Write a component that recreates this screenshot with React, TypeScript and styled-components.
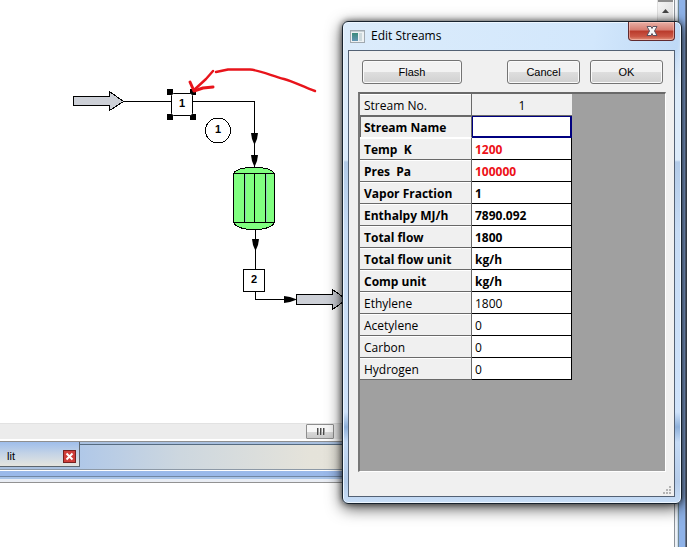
import React from "react";
import styled, { createGlobalStyle, css } from "styled-components";

const GlobalStyle = createGlobalStyle`
  *, *::before, *::after { box-sizing: border-box; }
  body { margin: 0; background: #fff; overflow: hidden; }
  button, input { font: inherit; }
`;

const Desktop = styled.div`
  position: relative;
  display: flex;
  height: 100vh;
  overflow: hidden;
  color: #000;
  font-family: "Open Sans", "Noto Sans", sans-serif;
  font-size: 12px;
`;

const MainColumn = styled.div`
  flex: 1;
  min-width: 0;
  display: flex;
  flex-direction: column;
`;

const CanvasRow = styled.div`
  flex: 1;
  min-height: 0;
  display: flex;
`;

const Canvas = styled.main`
  flex: 1;
  min-width: 0;
  overflow: hidden;
  background: #fff;
`;

const Diagram = styled.svg`
  display: block;
  font-family: "Liberation Sans", Arial, sans-serif;
`;

const VerticalScroll = styled.div`
  width: 16px;
  background: #ececec;
  border-left: 1px solid #e0e0e0;
`;

const ScrollArrow = styled.button`
  display: flex;
  justify-content: center;
  align-items: center;
  width: 100%;
  height: 20px;
  padding: 0;
  border: 0;
  border-top: 2px solid #8c8c8c;
  background: linear-gradient(90deg, #f3f3f3, #e4e4e4);
`;

const HorizontalScroll = styled.div`
  display: flex;
  height: 16px;
  padding-left: 306px;
  border-top: 1px solid #e2e2e2;
  background: #ececec;
`;

const ScrollThumb = styled.button`
  display: flex;
  justify-content: center;
  align-items: center;
  gap: 2px;
  width: 28px;
  height: 15px;
  padding: 0;
  border: 1px solid #8e8e8e;
  border-radius: 1px;
  background: linear-gradient(#f7f7f7 0 50%, #dadada 50%, #cacaca);
`;

const Grip = styled.span`
  width: 1px;
  height: 7px;
  background: #4c4c4c;
  box-shadow: 1px 0 #a6a6a6;
`;

const TabStrip = styled.div`
  display: flex;
  height: 29px;
  margin-top: 2px;
  border-top: 1px solid #8f8f8f;
  border-bottom: 1px solid #8d99a6;
  background: #a9c0df;
`;

const Tab = styled.div`
  display: flex;
  align-items: center;
  justify-content: space-between;
  width: 80px;
  height: 25px;
  padding: 4px 3px 0 7px;
  border-right: 1px solid #5c6670;
  border-bottom: 1px solid #5c6670;
  background: linear-gradient(#9fbeeb, #c5d4e6 50%, #e5e5df);
  font-family: "Liberation Sans", Arial, sans-serif;
  font-size: 11px;
`;

const TabClose = styled.button`
  display: flex;
  align-items: center;
  justify-content: center;
  width: 13px;
  height: 13px;
  padding: 0;
  border: 1px solid #762020;
  background: #cf3d39;
`;

const TabBackdrop = styled.div`
  flex: 1;
  margin-top: 2px;
  border-top: 1px solid #566b80;
  background: linear-gradient(90deg, #b0c8e8 0, #cdd7df 100px, #e5e3da 230px, #e8e6df);
`;

const FrameEdge = styled.div`
  height: 13px;
  border-bottom: 1px solid #929292;
  background: linear-gradient(#fff 0 1px, #9ab9ea 1px 6px, #7187a4 6px 7px, #a9c4e8 7px 9px, #e9edf4 9px);
`;

const LowerPane = styled.div`
  height: 64px;
  background: #fff;
`;

const RightFrame = styled.div`
  width: 14px;
  background: linear-gradient(90deg, #fff 0 1px, #8c9299 1px 2px, #edf1f5 2px 4px, #cddbe9 4px 5px, #6f8792 5px 6px, #8eb2e8 6px 12px, #64738d 12px 13px, #434b58 13px);
`;

const DialogWindow = styled.section`
  position: absolute;
  top: 21px;
  right: 5px;
  display: flex;
  flex-direction: column;
  width: 340px;
  height: 483px;
  padding: 0 6px 6px 5px;
  border: 1px solid #17222d;
  border-radius: 6px;
  background: linear-gradient(180deg, transparent 30px, #dcebfa 80px, #dcebfa 138px, #b3cbe8 140px, #c7dcf5 210px, #cfe3fb 390px, #8eb0da 405px, #c5dbf6 420px, #b5ccea 460px, #c8def7),
    linear-gradient(100deg, #dcecfb, #d2e7fc 60%, #bfd9f6 80%, #dce8f5 82%, #d1e1f3);
  box-shadow: inset 0 0 0 1px #edf6ff, 0 0 6px rgba(0, 0, 0, 0.6), 0 4px 16px rgba(0, 0, 0, 0.7);
`;

const TitleBar = styled.header`
  display: flex;
  align-items: center;
  gap: 6px;
  height: 28px;
  padding-left: 2px;
`;

const Title = styled.h1`
  flex: 1;
  margin: 0;
  font-size: 12px;
  font-weight: 400;
  line-height: 16px;
`;

const CloseButton = styled.button`
  display: flex;
  align-items: center;
  justify-content: center;
  align-self: flex-start;
  width: 47px;
  height: 19px;
  padding: 0;
  border: 1px solid #602a2f;
  border-top: 0;
  border-radius: 0 0 4px 4px;
  background: linear-gradient(#e8b0a6, #d67c70 45%, #b93a2b 50%, #ca5644 80%, #df8f79);
  box-shadow: inset 0 0 0 1px rgba(255, 210, 200, 0.5);
`;

const DialogBody = styled.div`
  flex: 1;
  min-height: 0;
  display: flex;
  flex-direction: column;
  gap: 8px;
  padding: 9px 8px 0 9px;
  border: 1px solid #536174;
  background: #f0f0f0;
`;

const ButtonBar = styled.div`
  display: flex;
  gap: 10px;
  padding: 0 3px 0 4px;
`;

const PushButton = styled.button<{ $wide?: boolean }>`
  width: ${(p) => (p.$wide ? 100 : 73)}px;
  height: 24px;
  ${(p) => p.$wide && css`margin-right: auto;`}
  padding: 0;
  border: 1px solid #747474;
  border-radius: 3px;
  background: linear-gradient(#f2f2f2 0 48%, #dedede 50%, #d0d0d0);
  box-shadow: inset 0 0 0 1px #fafafa;
  font-family: "Liberation Sans", Arial, sans-serif;
  font-size: 11px;
  line-height: 16px;
`;

const GridArea = styled.div`
  flex: 1;
  min-height: 0;
  border: 1px solid #fff;
  border-top: 2px solid #696969;
  border-left: 2px solid #777;
  background: #a0a0a0;
`;

const StreamTable = styled.table`
  width: 212px;
  border-collapse: separate;
  border-spacing: 0;
  table-layout: fixed;
`;

const LabelCol = styled.col`
  width: 112px;
`;

const RowLabel = styled.th<{ $strong?: boolean; $active?: boolean }>`
  height: 22px;
  padding: 2px 0 0 4px;
  border-right: 1px solid #696969;
  border-bottom: 1px solid #696969;
  background: #f0f0f0;
  box-shadow: inset 0 1px #fff;
  font-weight: ${(p) => (p.$strong ? 700 : 400)};
  line-height: 18px;
  text-align: left;
  white-space: pre;
  ${(p) => p.$active && css`
    border-bottom-color: #fff;
    box-shadow: inset 1px 1px #696969;
  `}
`;

const ColumnLabel = styled.th`
  height: 22px;
  padding: 2px 0 0;
  border-bottom: 1px solid #696969;
  background: #f0f0f0;
  font-weight: 400;
  line-height: 18px;
`;

const ValueCell = styled.td`
  height: 22px;
  padding: 0;
`;

const ValueInput = styled.input<{ $strong?: boolean; $fixed?: boolean; $active?: boolean }>`
  display: block;
  width: 100%;
  height: 22px;
  padding: 2px 3px 0;
  border: 0 solid #000;
  border-width: 0 1px 1px 0;
  border-radius: 0;
  outline: 0;
  background: #fff;
  color: ${(p) => (p.$fixed ? "#ed1118" : "#000")};
  font-weight: ${(p) => (p.$strong ? 700 : 400)};
  ${(p) => p.$active && css`
    border: 1px solid #000080;
    box-shadow: inset -1px -1px #000080;
  `}
`;

const StatusBar = styled.footer`
  display: flex;
  align-items: flex-end;
  justify-content: flex-end;
  height: 16px;
  margin-right: -6px;
`;

type Row = { label: string; value: string; strong?: boolean; fixed?: boolean; active?: boolean };

const rows: Row[] = [
  { label: "Stream Name", value: "", strong: true, active: true },
  { label: "Temp  K", value: "1200", strong: true, fixed: true },
  { label: "Pres  Pa", value: "100000", strong: true, fixed: true },
  { label: "Vapor Fraction", value: "1", strong: true },
  { label: "Enthalpy MJ/h", value: "7890.092", strong: true },
  { label: "Total flow", value: "1800", strong: true },
  { label: "Total flow unit", value: "kg/h", strong: true },
  { label: "Comp unit", value: "kg/h", strong: true },
  { label: "Ethylene", value: "1800" },
  { label: "Acetylene", value: "0" },
  { label: "Carbon", value: "0" },
  { label: "Hydrogen", value: "0" },
];

function FlowDiagram() {
  return (
    <Diagram width="657" height="423" viewBox="0 0 657 423" role="img" aria-label="Process flow diagram">
      <g fill="none" stroke="#000" shapeRendering="crispEdges">
        <path d="M123 101.500H254.500V168M255.500 229V299.500H290" />
        <path d="M73.500 96.500H109.500V91.500L123.500 101.500L109.500 110.500V105.500H73.500Z" fill="#cdd0d7" />
        <path d="M296.500 294.500H332.500V289.500L346.500 299.500L332.500 309.500V304.500H296.500Z" fill="#cdd0d7" />
        <path d="M233.500 173.500C236 169 246 167.500 254 167.500C264 167.500 272 169 274.500 173.500V222.500C272 227 264 229.500 254 229.500C244 229.500 236 227 233.500 222.500Z" fill="#80ff80" />
        <path d="M233.500 173.500H274.500M233.500 222.500H274.500M244.500 174V222M254.500 174V222M265.500 174V222" />
        <path d="M245.500 174V222M266.500 174V222" stroke="#8cd6b7" />
      </g>
      <circle cx="218" cy="130.500" r="12.500" fill="#fff" stroke="#000" shapeRendering="crispEdges" />
      <g fill="#000">
        <path d="M251 133H258L257 139L254.500 145L252 139Z" />
        <path d="M251 155H258L257 161L254.500 167L252 161Z" />
        <path d="M252 239H259L258 245L255.500 251L253 245Z" />
        <path d="M284 296L290 297L297 299.500L290 302L284 303Z" />
        <path d="M167 89H173V95H167ZM190 89H196V95H190ZM167 114H173V120H167ZM190 114H196V120H190Z" />
      </g>
      <g fill="#fff" stroke="#000">
        <rect x="171.500" y="93.500" width="21" height="22" rx="2" />
        <rect x="243.500" y="269.500" width="21" height="22" />
      </g>
      <g fontSize="11" fontWeight="700" textAnchor="middle">
        <text x="182" y="107">1</text>
        <text x="218" y="133">1</text>
        <text x="254" y="283">2</text>
      </g>
      <g fill="none" stroke="#e8141b" strokeWidth="2.400" strokeLinecap="round" strokeLinejoin="round">
        <path d="M315 91C303 87 295 82 284 79C270 75 258 70 250 69.500H228L216 72M213 71L206 79L194 90" />
        <path d="M190 82L194 91L203 88L213 87" strokeWidth="3" />
      </g>
    </Diagram>
  );
}

function AppIcon() {
  return (
    <svg width="15" height="13" viewBox="0 0 15 13" aria-hidden="true">
      <defs>
        <linearGradient id="app-icon-fill" x2="0" y2="1">
          <stop stopColor="#3c8b7b" />
          <stop offset="1" stopColor="#6396b5" />
        </linearGradient>
      </defs>
      <rect x="0.500" y="0.500" width="14" height="12" fill="#eef2f3" stroke="#a0a9b0" />
      <path d="M2 3H8V11H2Z" fill="url(#app-icon-fill)" />
      <path d="M9 3H12V11H9Z" fill="#cdd9dc" />
      <path d="M1 1.500H14" stroke="#c5ced2" />
    </svg>
  );
}

function Dialog() {
  return (
    <DialogWindow role="dialog" aria-labelledby="dialog-title">
      <TitleBar>
        <AppIcon />
        <Title id="dialog-title">Edit Streams</Title>
        <CloseButton type="button" aria-label="Close">
          <svg width="14" height="12" viewBox="0 0 14 12" aria-hidden="true">
            <path d="M2 1.500H6L7 3.500L8 1.500H12L9.500 6L12 10.500H8L7 8.500L6 10.500H2L4.500 6Z" fill="#f7f7f7" stroke="#5c5360" strokeLinejoin="round" />
          </svg>
        </CloseButton>
      </TitleBar>
      <DialogBody>
        <ButtonBar>
          <PushButton type="button" $wide>Flash</PushButton>
          <PushButton type="button">Cancel</PushButton>
          <PushButton type="button">OK</PushButton>
        </ButtonBar>
        <GridArea>
          <StreamTable>
            <colgroup>
              <LabelCol />
              <col />
            </colgroup>
            <thead>
              <tr>
                <RowLabel scope="row">Stream No.</RowLabel>
                <ColumnLabel scope="col">1</ColumnLabel>
              </tr>
            </thead>
            <tbody>
              {rows.map((row, i) => (
                <tr key={row.label}>
                  <RowLabel scope="row" $strong={row.strong} $active={row.active}>
                    <label htmlFor={`field-${i}`}>{row.label}</label>
                  </RowLabel>
                  <ValueCell>
                    <ValueInput
                      id={`field-${i}`}
                      defaultValue={row.value}
                      $strong={row.strong}
                      $fixed={row.fixed}
                      $active={row.active}
                    />
                  </ValueCell>
                </tr>
              ))}
            </tbody>
          </StreamTable>
        </GridArea>
        <StatusBar>
          <svg width="10" height="10" viewBox="0 0 10 10" fill="#b4b4b4" aria-hidden="true">
            <path d="M7 0h2v2h-2zM4 3h2v2h-2zM7 3h2v2h-2zM1 6h2v2h-2zM4 6h2v2h-2zM7 6h2v2h-2z" />
          </svg>
        </StatusBar>
      </DialogBody>
    </DialogWindow>
  );
}

export default function App() {
  return (
    <>
      <GlobalStyle />
      <Desktop>
        <MainColumn>
          <CanvasRow>
            <Canvas>
              <FlowDiagram />
            </Canvas>
            <VerticalScroll>
              <ScrollArrow type="button" aria-label="Scroll up">
                <svg width="7" height="4" viewBox="0 0 7 4" aria-hidden="true">
                  <path d="M0 4L3.500 0L7 4Z" fill="#444" />
                </svg>
              </ScrollArrow>
            </VerticalScroll>
          </CanvasRow>
          <HorizontalScroll>
            <ScrollThumb type="button" aria-label="Scroll horizontally">
              <Grip />
              <Grip />
              <Grip />
            </ScrollThumb>
          </HorizontalScroll>
          <TabStrip>
            <Tab>
              <span>lit</span>
              <TabClose type="button" aria-label="Close tab">
                <svg width="9" height="9" viewBox="0 0 9 9" aria-hidden="true">
                  <path d="M1.500 1.500L7.500 7.500M7.500 1.500L1.500 7.500" stroke="#fff" strokeWidth="2" />
                </svg>
              </TabClose>
            </Tab>
            <TabBackdrop />
          </TabStrip>
          <FrameEdge />
          <LowerPane />
        </MainColumn>
        <RightFrame />
        <Dialog />
      </Desktop>
    </>
  );
}
